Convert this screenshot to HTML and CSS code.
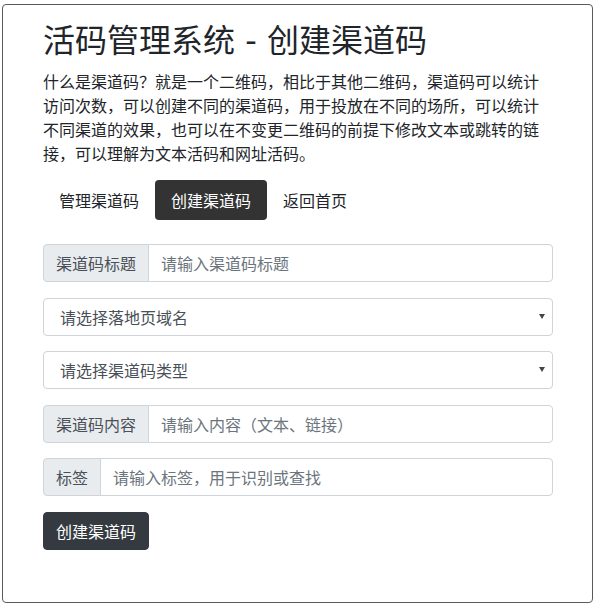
FILE: index.html
```html
<!DOCTYPE html>
<html lang="zh-CN">
<head>
<meta charset="utf-8">
<title>活码管理系统 - 创建渠道码</title>
<link rel="stylesheet" href="styles.css">
</head>
<body>
<div class="page">
  <h1 class="title">活码管理系统 - 创建渠道码</h1>
  <p class="intro">什么是渠道码？就是一个二维码，相比于其他二维码，渠道码可以统计访问次数，可以创建不同的渠道码，用于投放在不同的场所，可以统计不同渠道的效果，也可以在不变更二维码的前提下修改文本或跳转的链接，可以理解为文本活码和网址活码。</p>
  <ul class="nav">
    <li><a class="nav-link" href="#">管理渠道码</a></li>
    <li><a class="nav-link active" href="#">创建渠道码</a></li>
    <li><a class="nav-link" href="#">返回首页</a></li>
  </ul>
  <form class="form">
    <div class="input-group">
      <span class="addon">渠道码标题</span>
      <input class="control" type="text" placeholder="请输入渠道码标题">
    </div>
    <div class="select-wrap">
      <select class="select">
        <option>请选择落地页域名</option>
      </select>
      <span class="caret"></span>
    </div>
    <div class="select-wrap">
      <select class="select">
        <option>请选择渠道码类型</option>
      </select>
      <span class="caret"></span>
    </div>
    <div class="input-group">
      <span class="addon">渠道码内容</span>
      <input class="control" type="text" placeholder="请输入内容（文本、链接）">
    </div>
    <div class="input-group">
      <span class="addon">标签</span>
      <input class="control" type="text" placeholder="请输入标签，用于识别或查找">
    </div>
    <button class="btn" type="button">创建渠道码</button>
  </form>
</div>
</body>
</html>
```
FILE: styles.css
```css
* { box-sizing: border-box; }
html, body { margin: 0; padding: 0; background: #fff; }
body {
  font-family: "Noto Sans CJK SC", "Noto Sans", "Liberation Sans", sans-serif;
  color: #212529;
  font-size: 16px;
}
.page {
  margin: 4px 2px 0 2px;
  height: 599px;
  border: 1px solid #5a5a5a;
  border-radius: 4px;
  padding: 17px 39px 0 40px;
}
.title {
  margin: 0 0 9px;
  font-family: "DejaVu Sans", "Noto Sans CJK SC", sans-serif;
  font-size: 32px;
  line-height: 38px;
  font-weight: 400;
  color: #212529;
}
.intro {
  margin: 0 0 15px;
  font-size: 16px;
  line-height: 24px;
}
.nav {
  list-style: none;
  margin: 0 0 24px;
  padding: 0;
  display: flex;
}
.nav-link {
  display: block;
  padding: 8px 16px;
  line-height: 24px;
  color: #212529;
  text-decoration: none;
  border-radius: 4px;
}
.nav-link.active {
  background: #333333;
  color: #fff;
}
.form { display: flex; flex-direction: column; gap: 15.5px; align-items: flex-start; }
.input-group {
  display: flex;
  width: 100%;
  height: 38px;
}
.addon {
  display: flex;
  align-items: center;
  padding: 0 12px;
  background: #e9ecef;
  color: #495057;
  border: 1px solid #ced4da;
  border-radius: 4px 0 0 4px;
  line-height: 24px;
  white-space: nowrap;
}
.control {
  flex: 1;
  min-width: 0;
  margin-left: -1px;
  height: 38px;
  padding: 0 12px;
  border: 1px solid #ced4da;
  border-radius: 0 4px 4px 0;
  font: inherit;
  font-size: 16px;
  color: #495057;
  background: #fff;
  outline: none;
}
.control::placeholder { color: #6c757d; opacity: 1; }
.select-wrap {
  position: relative;
  width: 100%;
  height: 38px;
}
.select {
  -webkit-appearance: none;
  appearance: none;
  width: 100%;
  height: 38px;
  padding: 0 24px 0 16px;
  border: 1px solid #ced4da;
  border-radius: 4px;
  background: #fff;
  font: inherit;
  font-size: 16px;
  color: #495057;
  outline: none;
}
.caret {
  position: absolute;
  right: 8px;
  top: 16px;
  width: 0;
  height: 0;
  border-left: 3px solid transparent;
  border-right: 3px solid transparent;
  border-top: 5px solid #444;
  pointer-events: none;
}
.btn {
  height: 38px;
  padding: 0 12px;
  border: 1px solid #343a40;
  border-radius: 4px;
  background: #343a40;
  color: #fff;
  font: inherit;
  font-size: 16px;
  line-height: 24px;
}
```
